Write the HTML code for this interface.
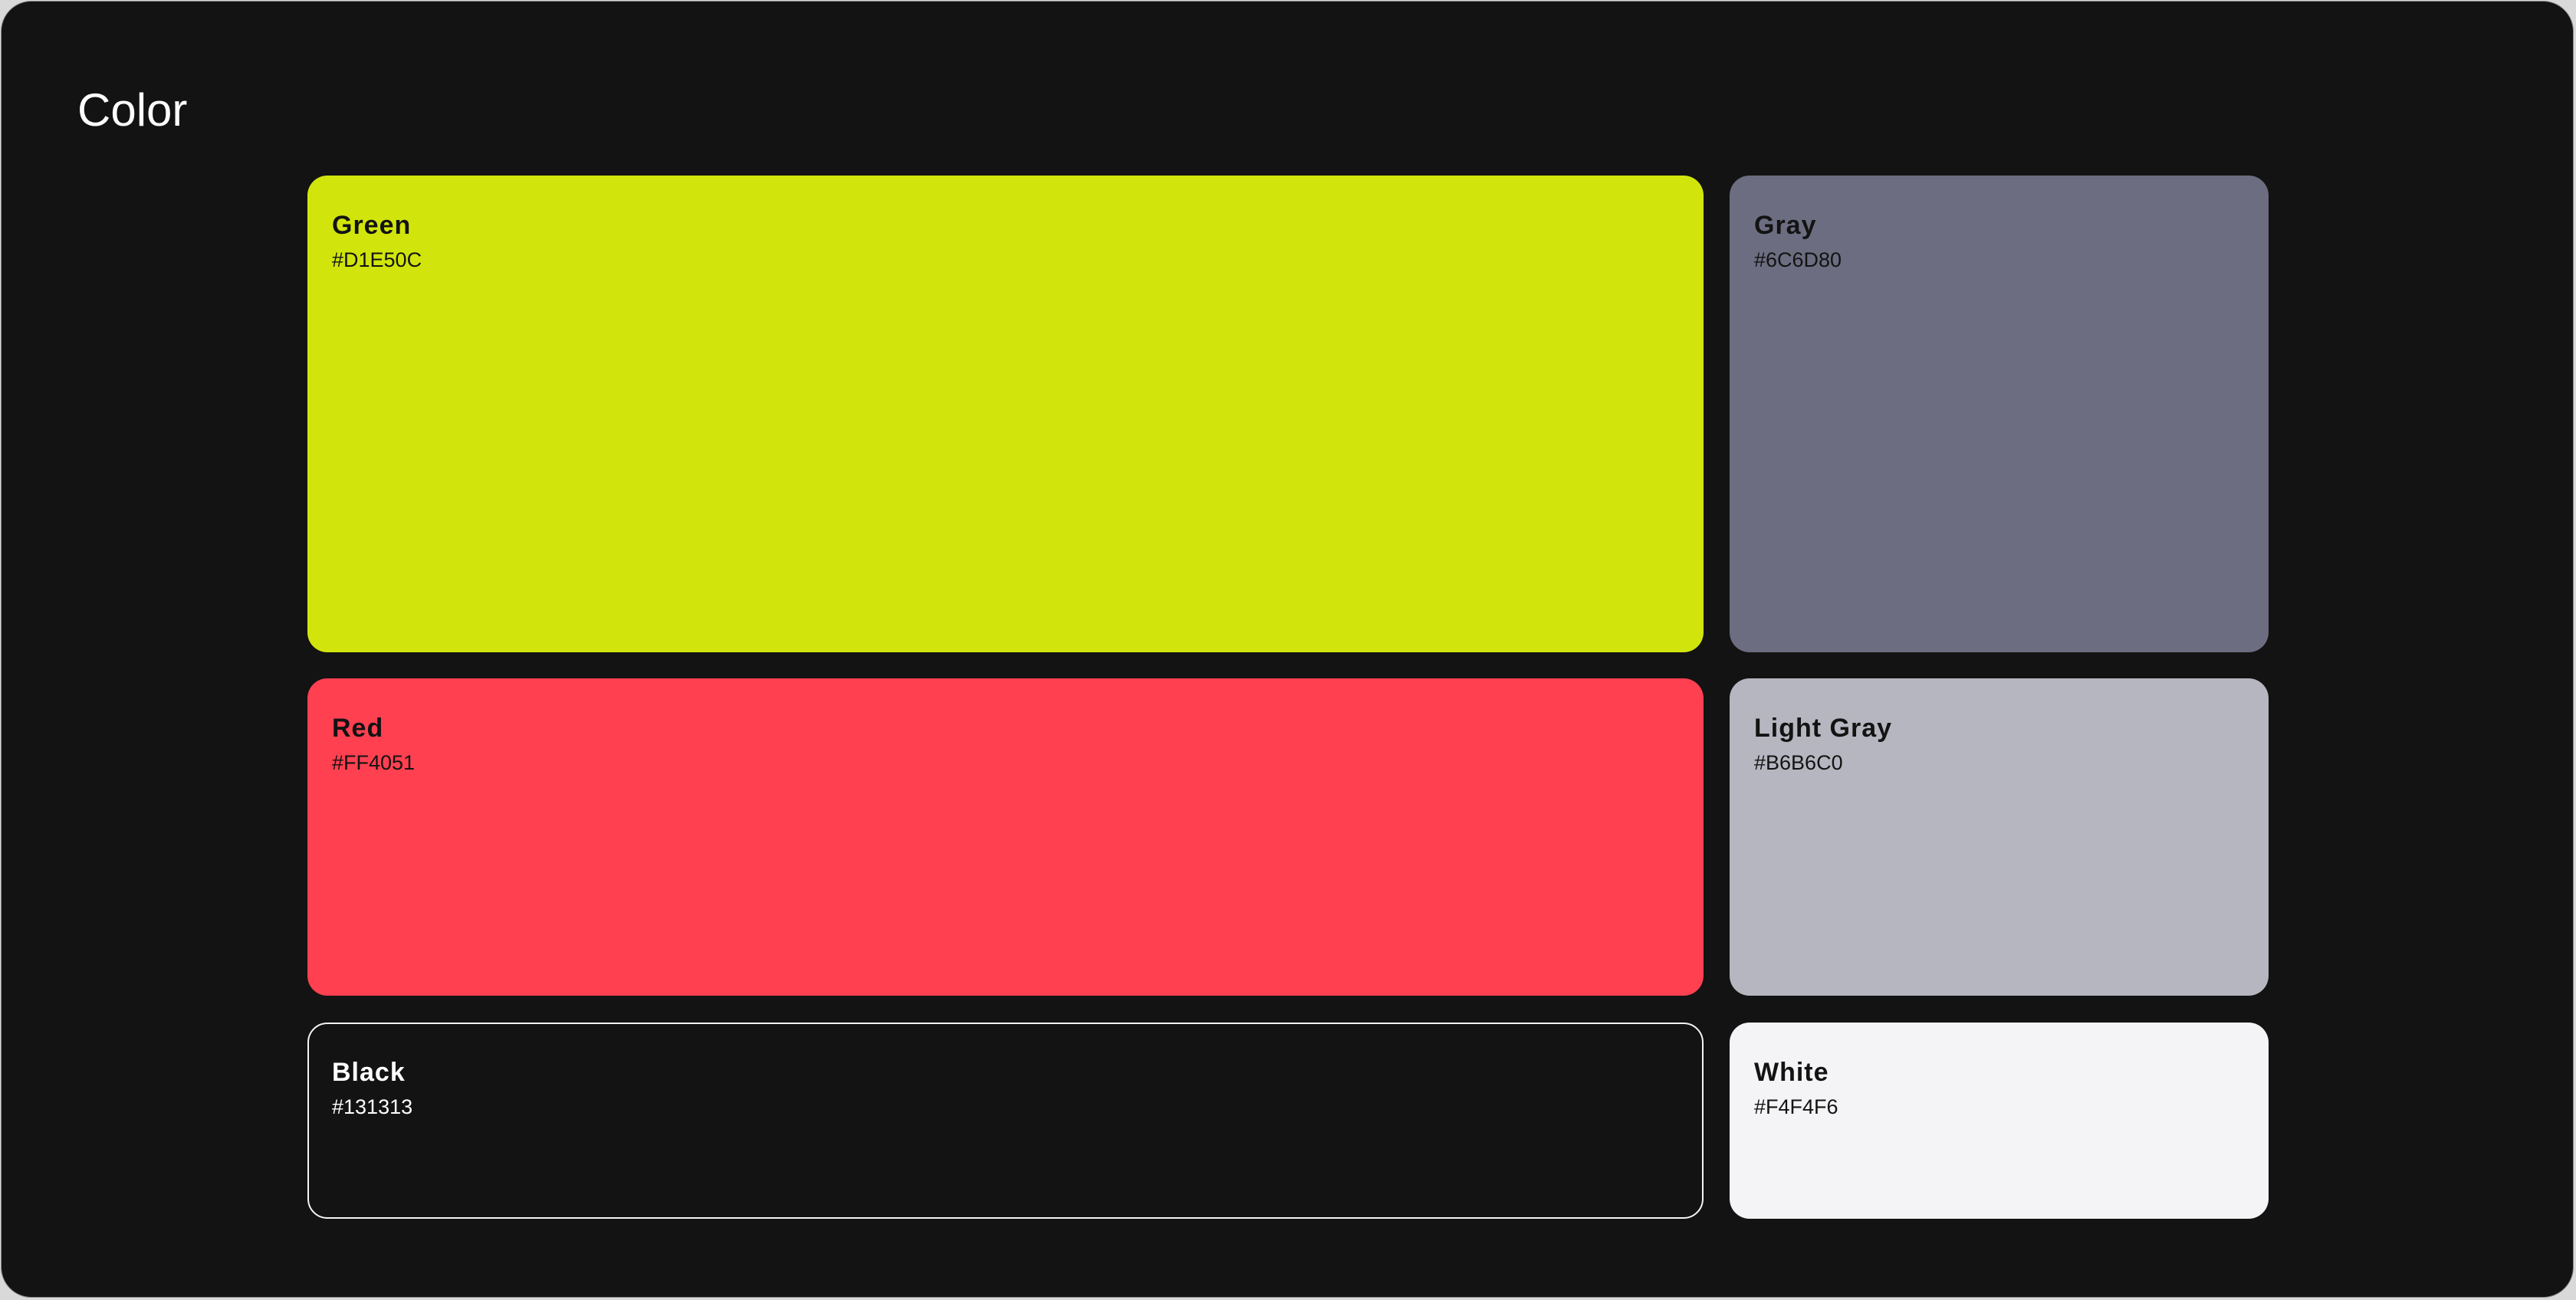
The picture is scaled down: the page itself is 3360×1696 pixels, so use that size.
<!DOCTYPE html>
<html><head><meta charset="utf-8"><style>
html,body{margin:0;padding:0;}
body{width:3360px;height:1696px;background:#d9d9d9;position:relative;overflow:hidden;font-family:"Liberation Sans",sans-serif;}
.outer{position:absolute;left:1px;top:1px;width:3356px;height:1692px;background:#131313;border:1px solid #8a8a8a;border-radius:40px;box-sizing:border-box;}
.title{position:absolute;left:101px;top:114px;font-size:60px;color:#fff;line-height:1;}
.c{position:absolute;border-radius:26px;box-sizing:border-box;}
.n{position:absolute;left:32px;top:48px;font-size:34px;font-weight:bold;letter-spacing:1px;line-height:1;}
.h{position:absolute;left:32px;top:97px;font-size:27px;line-height:1;}
</style></head><body>
<div class="outer"></div>
<div class="title">Color</div>
<div class="c" style="left:401px;top:229px;width:1821px;height:622px;background:#D1E50C;color:#131313"><div class="n">Green</div><div class="h">#D1E50C</div></div>
<div class="c" style="left:2256px;top:229px;width:703px;height:622px;background:#6C6D80;color:#131313"><div class="n">Gray</div><div class="h">#6C6D80</div></div>
<div class="c" style="left:401px;top:885px;width:1821px;height:414px;background:#FF4051;color:#131313"><div class="n">Red</div><div class="h">#FF4051</div></div>
<div class="c" style="left:2256px;top:885px;width:703px;height:414px;background:#B6B6C0;color:#131313"><div class="n">Light Gray</div><div class="h">#B6B6C0</div></div>
<div class="c" style="left:401px;top:1334px;width:1821px;height:256px;background:#131313;border:2px solid #f4f4f6;color:#fff"><div class="n" style="left:30px;top:46px">Black</div><div class="h" style="left:30px;top:95px">#131313</div></div>
<div class="c" style="left:2256px;top:1334px;width:703px;height:256px;background:#F4F4F6;color:#131313"><div class="n">White</div><div class="h">#F4F4F6</div></div>
</body></html>
